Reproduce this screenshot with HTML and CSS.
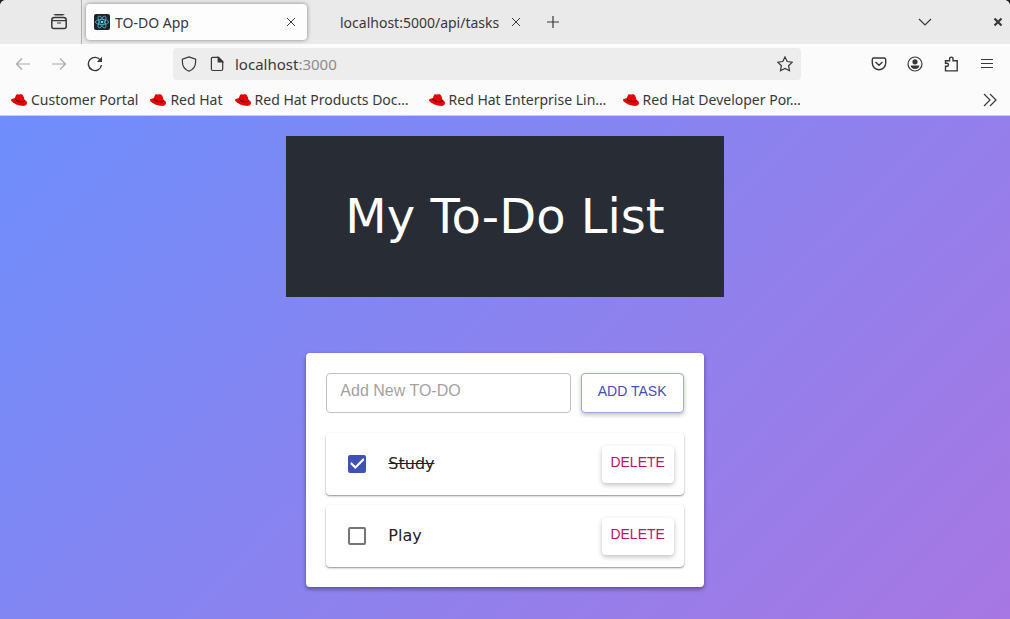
FILE: index.html
```html
<!DOCTYPE html>
<html lang="en">
<head>
<meta charset="utf-8">
<meta name="viewport" content="width=device-width, initial-scale=1">
<title>TO-DO App</title>
<link rel="stylesheet" href="styles.css">
</head>
<body>
<svg class="defs" aria-hidden="true">
  <symbol id="hat" viewBox="0 0 16 16">
    <path fill="#e60000" stroke="none" d="M3.600 6.500 4.900 3.200C5.300 2.200 6 2 7 2.400c.8.300 1.400.2 2-.1.600-.3 1.300-.2 2 .2 1 .6 1.500 1.600 1.900 3l.6 2.200C15.200 8.500 16 9.600 16 10.900c0 2.300-2.500 3.300-5.300 2.900C6.200 13.300 0 10.400 0 8c0-1 1.700-1.500 3.600-1.500z"/>
    <path fill="none" stroke="#3a0808" stroke-width="1" d="M3.500 6.600C4.700 8.500 8.200 9.900 11 9.800c1.400 0 2.500-.5 2.400-1.700"/>
  </symbol>
  <symbol id="close" viewBox="0 0 16 16"><path d="M4 4l8 8M12 4l-8 8" stroke-width="1"/></symbol>
</svg>
<div class="browser">
  <header class="chrome">
    <div class="tabs">
      <button class="overview" type="button" aria-label="Recent browsing"><svg class="icon" viewBox="0 0 16 16"><path d="M3 .9c0-.3 10-.3 10 0" stroke-width="1.500"/><path d="M3.500 3.500h9c1.500 0 2.700 1 2.700 2.500v6.500c0 1.200-.8 2-2 2H2.800c-1.200 0-2-.8-2-2V6c0-1.500 1.200-2.500 2.700-2.500z" stroke-width="1.500"/><path d="M1 6.600h14M6 9h4"/></svg></button>
      <div class="tab active">
        <svg class="icon react" viewBox="0 0 16 16"><rect width="16" height="16" rx="2" fill="#20232a" stroke="none"/><g stroke="#53b9d4" stroke-width=".8"><ellipse cx="8" cy="8" rx="6.600" ry="2.600"/><ellipse cx="8" cy="8" rx="6.600" ry="2.600" transform="rotate(60 8 8)"/><ellipse cx="8" cy="8" rx="6.600" ry="2.600" transform="rotate(120 8 8)"/></g><circle cx="8" cy="8" r="1.300" fill="#61dafb" stroke="none"/></svg>
        <span class="tab-title">TO-DO App</span>
        <button type="button" aria-label="Close tab"><svg class="icon"><use href="#close"/></svg></button>
      </div>
      <div class="tab plain">
        <span class="tab-title">localhost:5000/api/tasks</span>
        <button type="button" aria-label="Close tab"><svg class="icon"><use href="#close"/></svg></button>
      </div>
      <button class="new-tab" type="button" aria-label="New tab"><svg class="icon" viewBox="0 0 16 16"><path d="M8 2v12M2 8h12"/></svg></button>
      <div class="window-actions">
        <button type="button" aria-label="List all tabs"><svg class="icon" viewBox="0 0 16 16"><path d="M2 5l6 6 6-6"/></svg></button>
        <button type="button" aria-label="Close window"><svg class="icon" viewBox="0 0 16 16"><path d="M4.500 4.500l7 7M11.500 4.500l-7 7" stroke-width="2.200"/></svg></button>
      </div>
    </div>
    <nav class="toolbar" aria-label="Navigation">
      <button class="tool" type="button" aria-label="Back" disabled><svg class="icon" viewBox="0 0 16 16"><path d="M15 8H1.500M7 2.500L1.500 8 7 13.500"/></svg></button>
      <button class="tool" type="button" aria-label="Forward" disabled><svg class="icon" viewBox="0 0 16 16"><path d="M1 8h13.500M9 2.500L14.500 8 9 13.500"/></svg></button>
      <button class="tool" type="button" aria-label="Reload"><svg class="icon" viewBox="0 0 16 16"><path d="M13.600 4.500A6.600 6.600 0 1 0 14.500 9" stroke-width="1.400"/><path d="M15 .8V6H9.800z" fill="currentColor" stroke="none"/></svg></button>
      <div class="urlbar">
        <svg class="icon" viewBox="0 0 16 16"><path d="M8 .9L14.600 3.200V6c0 4.200-2.600 7.600-6.600 9.300C4 13.600 1.400 10.200 1.400 6V3.200z"/></svg>
        <svg class="icon" viewBox="0 0 16 16"><path d="M3.600 1.400H9.500L13.700 5.600V13a1.500 1.500 0 0 1-1.500 1.500H3.900A1.500 1.500 0 0 1 2.400 13V2.600a1.200 1.200 0 0 1 1.200-1.200z"/><path d="M9.200 1.400V6h4.500z" fill="currentColor"/></svg>
        <span class="url">localhost<span>:3000</span></span>
        <button type="button" aria-label="Bookmark this page"><svg class="icon" viewBox="0 0 16 16"><path d="M8 .9l2.200 4.600 5 .7-3.600 3.500.9 5L8 12.400l-4.500 2.300.9-5L.8 6.200l5-.7z"/></svg></button>
      </div>
      <button class="tool" type="button" aria-label="Save to Pocket"><svg class="icon" viewBox="0 0 16 16"><path d="M2.800 2h10.400a1.500 1.500 0 0 1 1.500 1.500V7a6.700 6.700 0 0 1-13.400 0V3.500A1.500 1.500 0 0 1 2.800 2zM4.500 6L8 9.300 11.500 6" stroke-width="1.400"/></svg></button>
      <button class="tool" type="button" aria-label="Account"><svg class="icon" viewBox="0 0 16 16"><circle cx="8" cy="8" r="7"/><circle cx="8" cy="5.800" r="2.600" fill="currentColor" stroke="none"/><path d="M3.700 9.500h8.600c0 2-1.800 3.500-4.300 3.500s-4.300-1.500-4.300-3.500z" fill="currentColor" stroke="none"/></svg></button>
      <button class="tool" type="button" aria-label="Extensions"><svg class="icon" viewBox="0 0 16 16"><path d="M2.500 10.300V14.900H14.200V4.700H10V2.800a1.700 1.700 0 0 0-3.400 0V4.700H2.500V7.300H4a1.500 1.500 0 0 1 0 3z" stroke-width="1.400"/></svg></button>
      <button class="tool" type="button" aria-label="Menu"><svg class="icon" viewBox="0 0 16 16"><path d="M2 3.500h12M2 7.500h12M2 11.500h12"/></svg></button>
    </nav>
    <nav class="bookmarks" aria-label="Bookmarks">
      <a href="#"><svg class="icon"><use href="#hat"/></svg>Customer Portal</a>
      <a href="#"><svg class="icon"><use href="#hat"/></svg>Red Hat</a>
      <a class="long" href="#"><svg class="icon"><use href="#hat"/></svg>Red Hat Products Doc…</a>
      <a class="long" href="#"><svg class="icon"><use href="#hat"/></svg>Red Hat Enterprise Lin…</a>
      <a class="long" href="#"><svg class="icon"><use href="#hat"/></svg>Red Hat Developer Por…</a>
      <button type="button" aria-label="More bookmarks"><svg class="icon" viewBox="0 0 16 16"><path d="M2 2l6 6-6 6M8 2l6 6-6 6"/></svg></button>
    </nav>
  </header>
  <div class="page">
    <main class="app">
      <h1 class="title">My To-Do List</h1>
      <section class="card">
        <form class="new-task">
          <input type="text" placeholder="Add New TO-DO" aria-label="Add New TO-DO">
          <button class="add" type="button">ADD TASK</button>
        </form>
        <ul class="tasks">
          <li class="task"><label><input type="checkbox" checked><span>Study</span></label><button class="delete" type="button">DELETE</button></li>
          <li class="task"><label><input type="checkbox"><span>Play</span></label><button class="delete" type="button">DELETE</button></li>
        </ul>
      </section>
    </main>
  </div>
</div>
</body>
</html>
```

FILE: styles.css
```css
* { box-sizing: border-box; }

html { background: #222; }

body {
  margin: 0;
  font-family: "Noto Sans", sans-serif;
  font-size: 14px;
  color: #38383a;
}

button {
  padding: 0;
  border: 0;
  background: none;
  color: inherit;
  font: inherit;
  display: flex;
  align-items: center;
  justify-content: center;
}

.defs { display: none; }

.icon {
  width: 16px;
  height: 16px;
  flex: none;
  fill: none;
  stroke: currentColor;
  stroke-width: 1.2;
}

.browser {
  display: flex;
  flex-direction: column;
  min-height: 100vh;
  border-radius: 6px 6px 0 0;
  overflow: hidden;
}

.chrome {
  background: #fbfbfb;
  border-bottom: 1px solid #cfcfd8;
}

/* Tab strip */
.tabs {
  display: flex;
  height: 44px;
  background: #eaeaea;
}

.overview {
  width: 82px;
  padding-left: 37px;
  border-right: 1px solid #b0b0b0;
}

.tab {
  display: flex;
  align-items: center;
  height: 36px;
  margin-top: 4px;
  border-radius: 4px;
}

.tab.active {
  width: 221px;
  margin-left: 4px;
  padding: 0 8px;
  gap: 5px;
  background: #fdfdfd;
  box-shadow: 0 0 4px rgba(0, 0, 0, 0.45);
}

.tab.active .tab-title { flex: 1; }

.tab.plain {
  margin-left: 33px;
  gap: 9px;
}

.new-tab { margin-left: 21px; }

.window-actions {
  display: flex;
  gap: 57px;
  margin-left: auto;
  padding-right: 4px;
}

/* Navigation toolbar */
.toolbar {
  display: flex;
  align-items: center;
  height: 40px;
  padding: 0 5px;
}

.tool {
  width: 36px;
  height: 32px;
}

.tool:disabled { color: #aaa; }

.urlbar {
  display: flex;
  align-items: center;
  flex: 1;
  height: 32px;
  margin: 0 60px;
  padding: 0 8px;
  gap: 12px;
  border-radius: 4px;
  background: #ededed;
}

.url {
  flex: 1;
  margin-left: -2px;
  font-size: 15px;
}

.url span { color: #8c8c8c; }

/* Bookmarks bar */
.bookmarks {
  display: flex;
  align-items: center;
  gap: 12px;
  height: 31px;
  padding: 0 12px 0 11px;
}

.bookmarks a {
  display: flex;
  align-items: center;
  gap: 4px;
  color: inherit;
  text-decoration: none;
  white-space: nowrap;
}

.bookmarks .long { width: 182px; }
.bookmarks button { margin-left: auto; }

/* To-do page */
.page {
  flex: 1;
  padding: 20px;
  background: linear-gradient(135deg, #6e8efb, #a777e3);
  font-family: "DejaVu Sans", sans-serif;
  font-size: 16px;
  color: #212121;
}

.app {
  width: fit-content;
  margin: 0 auto;
}

.title {
  margin: 0 0 56px;
  padding: 52px 59px;
  background: #282c34;
  color: #fff;
  font-size: 48px;
  font-weight: 400;
  line-height: 57px;
}

.card {
  margin: 0 20px;
  padding: 20px;
  border-radius: 4px;
  background: #fff;
  box-shadow: 0 2px 4px rgba(0, 0, 0, 0.4);
}

.new-task {
  display: flex;
  gap: 10px;
}

.new-task input {
  flex: 1;
  min-width: 0;
  height: 40px;
  padding: 0 13px 4px;
  border: 1px solid #c0c0c0;
  border-radius: 4px;
  background: #fff;
  font: 16px "Liberation Sans", sans-serif;
}

.new-task input::placeholder { color: #a2a2a2; opacity: 1; }

.add,
.delete {
  border-radius: 4px;
  background: #fff;
  font: 14px "Liberation Sans", sans-serif;
  white-space: nowrap;
  padding-bottom: 5px;
}

.add {
  width: 103px;
  height: 40px;
  border: 1px solid #9fa8da;
  color: #3f51b5;
  box-shadow: 0 2px 4px rgba(0, 0, 0, 0.25);
}

.delete {
  width: 72px;
  height: 37px;
  color: #c51162;
  box-shadow: 0 2px 5px rgba(0, 0, 0, 0.25);
}

.tasks {
  display: grid;
  gap: 10px;
  margin: 20px 0 0;
  padding: 0;
  list-style: none;
}

.task {
  display: flex;
  align-items: center;
  justify-content: space-between;
  height: 62px;
  padding: 0 10px 0 22px;
  border-radius: 4px;
  box-shadow: 0 1px 2px rgba(0, 0, 0, 0.45);
}

.task label {
  display: flex;
  align-items: center;
  gap: 22px;
}

.task span { padding-bottom: 2px; }

.task input {
  appearance: none;
  width: 18px;
  height: 18px;
  margin: 0;
  border: 2px solid #757575;
  border-radius: 2px;
}

.task input:checked {
  border-color: #3f51b5;
  background: #3f51b5;
}

.task input:checked::before {
  content: "";
  display: block;
  height: 14px;
  background: #fff;
  clip-path: polygon(0 7px, 1px 5px, 5px 9px, 13px 1px, 14px 3px, 5px 12px);
}

.task input:checked + span { text-decoration: line-through; }
```
